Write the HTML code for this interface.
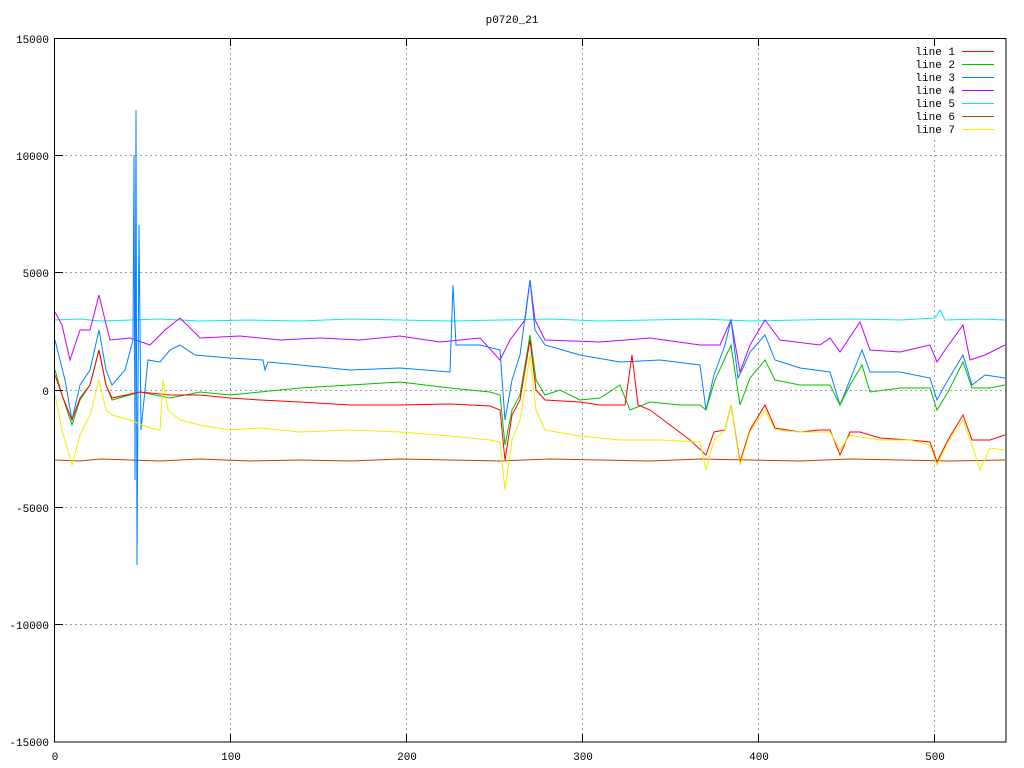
<!DOCTYPE html>
<html><head><meta charset="utf-8"><style>
html,body{margin:0;padding:0;background:#fff}
svg{display:block}
text{font-family:"Liberation Mono",monospace;font-size:11px;fill:#000}
</style></head><body>
<svg width="1024" height="768" viewBox="0 0 1024 768" xmlns="http://www.w3.org/2000/svg">
<rect width="1024" height="768" fill="#fff"/>
<g stroke="#a0a0a0" stroke-dasharray="2,3" stroke-width="1">
<line x1="55" y1="155.5" x2="1006" y2="155.5"/>
<line x1="55" y1="272.5" x2="1006" y2="272.5"/>
<line x1="55" y1="390.5" x2="1006" y2="390.5"/>
<line x1="55" y1="507.5" x2="1006" y2="507.5"/>
<line x1="55" y1="624.5" x2="1006" y2="624.5"/>
<line x1="230.5" y1="38" x2="230.5" y2="742"/>
<line x1="406.5" y1="38" x2="406.5" y2="742"/>
<line x1="582.5" y1="38" x2="582.5" y2="742"/>
<line x1="758.5" y1="38" x2="758.5" y2="742"/>
<line x1="934.5" y1="140" x2="934.5" y2="742"/>
</g>
<g fill="none" stroke-width="1">
<polyline stroke="#00eeee" points="55,320 80,319 100,321 130,320 160,319 200,321 250,320 300,321 350,319 400,320 450,321 500,320 550,319 600,321 650,320 700,319 750,321 800,320 850,319 900,320 935,318 940,310 945,320 980,319 1005,320"/>
<polyline stroke="#c04000" points="55,460 80,461 100,459 130,460 160,461 200,459 250,461 300,460 350,461 400,459 450,460 500,461 550,459 600,460 650,461 700,459 750,460 800,461 850,459 900,460 950,461 1005,460"/>
<polyline stroke="#c000ff" points="55,312 62,325 70,360 80,330 90,330 99,295 105,320 110,340 130,338 150,345 165,330 180,318 200,338 240,336 280,340 320,338 360,340 400,336 440,342 480,338 500,360 510,340 525,320 530,280 535,320 545,340 600,342 650,338 700,345 720,345 731,320 740,372 750,345 765,320 780,340 820,345 830,338 840,352 860,322 870,350 900,352 930,345 937,362 945,350 963,325 970,360 985,355 1005,345"/>
<polyline stroke="#0080ff" points="55,340 65,380 72,420 80,385 90,370 99,330 106,370 112,385 125,370 133,340 134,155 135,480 136,110 137,565 139,225 141,430 148,360 160,362 170,350 180,345 195,355 230,358 263,360 265,370 268,362 300,365 350,370 400,368 450,372 453,285 456,345 480,345 500,350 505,420 512,380 520,355 526,310 530,280 535,330 545,345 580,355 620,362 660,360 700,365 706,410 714,375 725,345 731,320 738,378 742,370 750,352 765,335 775,360 800,368 830,372 840,405 850,380 862,350 870,372 900,372 930,378 937,400 945,385 963,355 972,385 985,375 1005,378"/>
<polyline stroke="#00c000" points="55,370 62,395 72,425 80,400 90,385 99,350 106,385 112,400 140,392 170,398 200,392 230,395 260,392 300,388 350,385 400,382 450,388 490,392 500,395 505,445 512,410 520,395 530,335 536,380 545,395 560,390 580,400 600,398 620,385 630,410 650,402 680,405 700,405 706,410 715,380 731,345 740,405 750,378 765,360 775,380 800,385 830,385 840,405 850,385 862,365 870,392 900,388 930,388 937,410 948,392 963,362 972,388 990,388 1005,385"/>
<polyline stroke="#ff0000" points="55,375 62,395 72,420 80,398 90,385 99,350 106,385 112,398 140,392 170,395 200,395 230,398 260,400 300,402 350,405 400,405 450,404 490,406 500,410 505,460 512,415 520,400 530,340 536,390 545,400 580,402 600,405 625,405 632,355 638,405 650,410 670,425 690,440 706,455 714,432 725,430 731,405 740,462 750,430 765,405 775,428 800,432 820,430 830,430 840,455 850,432 860,432 880,438 910,440 930,442 937,462 948,440 963,415 972,440 990,440 1005,435"/>
<polyline stroke="#eeee00" points="55,395 62,430 72,465 80,435 90,415 99,380 106,410 112,415 130,420 150,428 160,430 163,380 168,410 180,420 200,425 230,430 260,428 300,432 350,430 400,432 450,436 490,440 500,442 505,490 512,440 520,420 530,355 536,410 545,430 580,436 620,440 660,440 700,442 706,470 714,440 725,430 731,405 740,465 750,432 765,410 775,430 800,432 830,432 840,450 850,435 860,437 880,440 910,440 930,445 937,465 948,442 963,420 972,445 980,470 990,448 1005,450"/>
</g>
<rect x="54.5" y="38.5" width="951.5" height="703.5" fill="none" stroke="#000" stroke-width="1"/>
<g stroke="#000">
<line x1="55" y1="155.5" x2="63" y2="155.5"/><line x1="55" y1="272.5" x2="63" y2="272.5"/><line x1="55" y1="390.5" x2="63" y2="390.5"/><line x1="55" y1="507.5" x2="63" y2="507.5"/><line x1="55" y1="624.5" x2="63" y2="624.5"/>
<line x1="230.5" y1="38" x2="230.5" y2="46"/><line x1="406.5" y1="38" x2="406.5" y2="46"/><line x1="582.5" y1="38" x2="582.5" y2="46"/><line x1="758.5" y1="38" x2="758.5" y2="46"/><line x1="934.5" y1="38" x2="934.5" y2="46"/>
<line x1="230.5" y1="742" x2="230.5" y2="734"/><line x1="406.5" y1="742" x2="406.5" y2="734"/><line x1="582.5" y1="742" x2="582.5" y2="734"/><line x1="758.5" y1="742" x2="758.5" y2="734"/><line x1="934.5" y1="742" x2="934.5" y2="734"/>
</g>
<text x="512" y="23" text-anchor="middle">p0720_21</text>
<g text-anchor="end">
<text x="49" y="43">15000</text><text x="49" y="160">10000</text><text x="49" y="277">5000</text><text x="49" y="395">0</text><text x="49" y="512">-5000</text><text x="49" y="629">-10000</text><text x="49" y="746">-15000</text>
</g>
<g text-anchor="middle">
<text x="55" y="760">0</text><text x="231" y="760">100</text><text x="407" y="760">200</text><text x="583" y="760">300</text><text x="759" y="760">400</text><text x="935" y="760">500</text>
</g>
<g text-anchor="end">
<text x="955" y="55">line 1</text><text x="955" y="68">line 2</text><text x="955" y="81">line 3</text><text x="955" y="94">line 4</text><text x="955" y="107">line 5</text><text x="955" y="120">line 6</text><text x="955" y="133">line 7</text>
</g>
<g stroke-width="1">
<line x1="962" y1="51.5" x2="994" y2="51.5" stroke="#ff0000"/>
<line x1="962" y1="64.5" x2="994" y2="64.5" stroke="#00c000"/>
<line x1="962" y1="77.5" x2="994" y2="77.5" stroke="#0080ff"/>
<line x1="962" y1="90.5" x2="994" y2="90.5" stroke="#c000ff"/>
<line x1="962" y1="103.5" x2="994" y2="103.5" stroke="#00eeee"/>
<line x1="962" y1="116.5" x2="994" y2="116.5" stroke="#c04000"/>
<line x1="962" y1="129.5" x2="994" y2="129.5" stroke="#eeee00"/>
</g>
</svg>
</body></html>
